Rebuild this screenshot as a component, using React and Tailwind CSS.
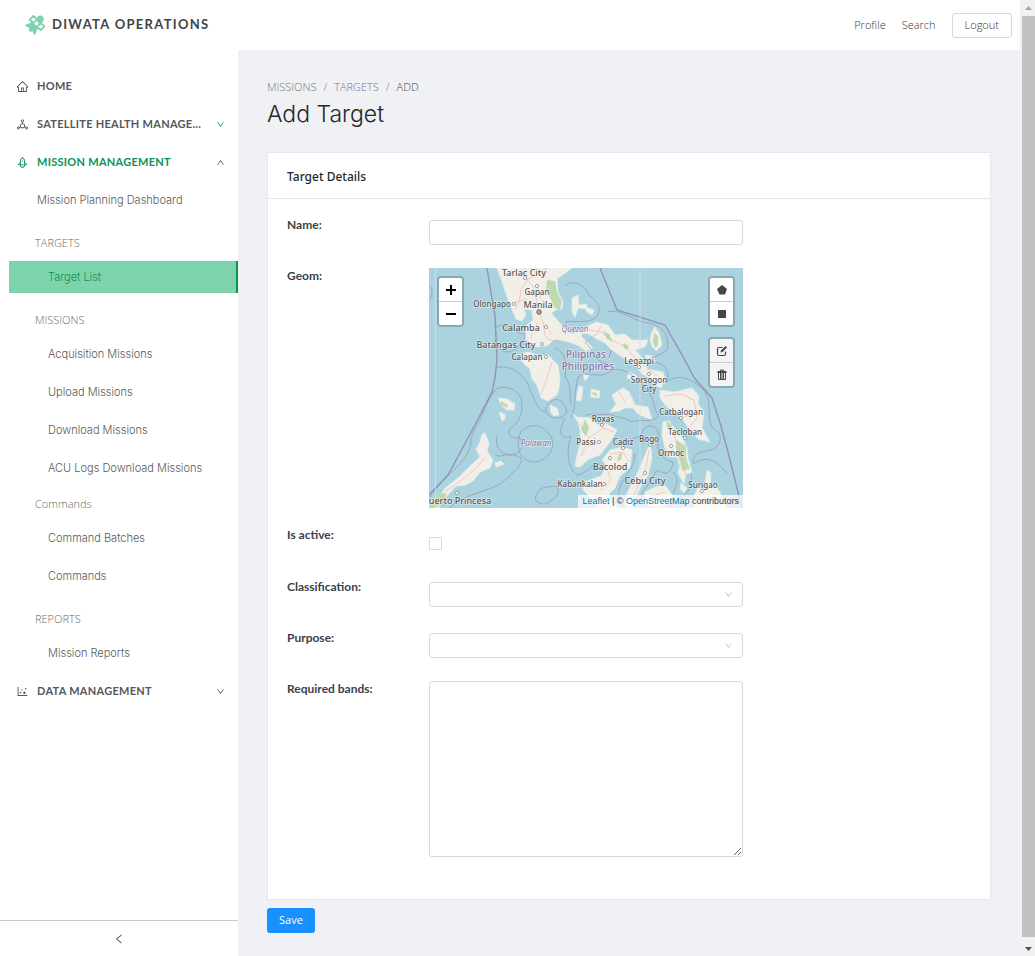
import React from "react";
import {
  AiOutlineHome,
  AiOutlineDeploymentUnit,
  AiOutlineRocket,
  AiOutlineDotChart,
  AiOutlineDown,
  AiOutlineUp,
  AiOutlineLeft,
} from "react-icons/ai";

const land = [
  "M68 0L73 14L79 31L83 41L87 51L93 53L97 47L95 41L103 42L104 52L98 57L96 71L106 79L118 78L126 71L140 74L150 78L158 84L164 80L157 73L152 68L159 58L167 54L179 57L186 67L196 66L203 72L219 72L216 79L206 82L214 91L219 101L234 104L237 113L223 111L213 106L206 97L193 89L183 82L176 75L166 70L160 66L150 64L142 66L136 61L129 53L122 45L127 42L133 41L134 33L129 24L128 11L143 0Z",
  "M88 87L99 84L111 88L119 87L129 97L131 111L130 120L128 127L119 133L112 130L108 117L103 111L101 101L96 97Z",
  "M223 64L226 59L230 65L233 77L227 83L223 78L221 71Z",
  "M143 30L149 27L150 37L158 36L157 41L149 40L146 49L143 44Z",
  "M183 127L194 120L200 124L206 137L219 139L223 152L209 146L204 140L196 140L190 143L181 144L187 136Z",
  "M231 122L245 124L263 120L270 128L269 136L275 144L273 160L281 174L269 171L259 160L253 150L243 143L236 137L231 130Z",
  "M234 154L240 153L246 161L254 171L258 180L259 190L263 204L257 206L255 216L249 205L251 198L248 189L240 189L236 180L233 167Z",
  "M143 145L148 149L161 150L169 157L178 156L188 162L181 174L171 187L160 191L151 199L146 198L148 187L152 174L151 162L149 154Z",
  "M181 182L193 179L203 182L201 200L191 208L186 220L180 226L181 233L189 240L169 240L160 228L154 222L155 214L172 208L178 198L173 192Z",
  "M221 175L223 190L219 207L210 222L205 234L201 240L196 237L198 225L208 206L216 187Z",
  "M216 224L226 219L236 217L243 227L239 236L229 240L216 236Z",
  "M269 219L275 222L278 202L282 205L281 221L286 216L293 228L298 240L266 240L264 230Z",
  "M56 165L60 175L58 183L64 192L61 200L51 204L44 213L36 217L27 218L19 227L9 240L0 240L0 235L12 226L16 220L29 210L39 200L51 189L47 181L51 174L53 166Z",
  "M69 130L78 131L86 136L85 142L78 142L73 138Z",
  "M70 144L76 146L76 151L73 153Z",
  "M66 195L72 193L75 196L67 199Z",
  "M121 137L128 140L130 147L125 148L122 145Z",
  "M150 118L154 119L152 133L147 132Z",
  "M156 39L165 42L163 47L158 44Z",
  "M162 121L171 123L170 130L162 129Z",
  "M216 87L223 88L227 94L220 95Z",
  "M225 110L235 113L232 120L224 116Z",
  "M200 104L208 108L206 113L198 110Z",
  "M154 106L160 108L156 113Z",
  "M252 215L258 220L255 225L251 221Z",
];

const greens = [
  "M118 12L126 13L128 24L133 33L131 42L126 40L121 30L117 20Z",
  "M225 65L229 68L229 77L226 80L224 74Z",
  "M247 172L257 178L257 190L261 201L253 203L251 194L247 183Z",
  "M156 151L160 160L157 168L152 162Z",
  "M72 133L79 137L78 140L72 137Z",
  "M190 186L193 185L192 192L188 193Z",
  "M11 225L18 226L14 235L6 240L0 240L0 237Z",
  "M163 124L168 125L168 128L164 127Z",
  "M174 63L180 66L184 74L178 71Z",
  "M195 75L200 78L198 82L194 79Z",
  "M238 153L243 157L241 162L237 158Z",
];

const roads = [
  "M96 0L98 12L92 22L90 34L86 42M98 12L104 18L107 28L109 42L114 54L116 68L121 72L136 76M109 20L112 32M86 34L98 31M109 55L104 60L102 70M98 12L108 6L118 0M116 55L122 66",
  "M160 62L172 64L182 72L196 78L206 90L216 98L228 108M172 58L168 66L156 74",
  "M112 126L118 110L123 94M151 156L160 170L152 188M160 170L174 160L185 164",
  "M180 186L194 184L200 194M178 200L182 212L172 222M220 182L217 200L208 220L202 236",
  "M241 158L249 176L253 192L257 208M236 128L252 126L265 132L268 150L260 160M218 230L236 224M268 236L286 232",
  "M55 190L50 197L36 210L18 222L6 238M190 124L196 134M252 150L262 146",
];

const boundaries = [
  "M58 0L62 25L66 47L67 70L68 91L66 110L63 124L46 157L19 207L0 227",
  "M171 0L188 42L236 57L253 87L266 111L276 122L283 130L292 158L299 184L309 224L313 240",
];

const coastlines = [
  "M64 124C70 116 86 118 92 130C96 146 88 156 82 160C76 166 84 172 90 169C96 178 94 184 82 187C70 186 66 178 68 168",
  "M92 164C98 156 112 155 118 164C128 172 124 186 114 191C104 198 92 192 90 182C88 172 90 168 92 164",
  "M120 135C128 127 136 134 138 144C134 152 122 152 117 144C116 140 118 138 120 135",
  "M0 230C14 208 38 196 42 176C40 166 50 158 56 140C60 130 64 126 66 123",
  "M20 240C34 226 60 224 74 214C84 204 94 198 92 190C80 182 70 192 66 186",
  "M108 226C112 216 122 220 127 218C133 224 126 232 116 236C108 236 104 232 108 226",
  "M136 150C128 166 132 172 142 168C136 186 140 202 148 207C158 206 162 196 172 196",
  "M66 60C76 52 86 64 94 66C100 62 94 82 78 84C70 84 68 76 66 72",
  "M68 100C80 96 90 104 98 114C104 128 108 142 116 144M142 150C148 138 144 122 150 108C160 102 170 112 180 104",
  "M136 18C144 10 158 18 160 28C170 32 174 44 166 50C158 56 146 52 136 54",
  "M178 44C192 40 202 52 218 55C232 56 242 68 238 82C228 90 222 88 218 94C234 92 242 102 238 114",
  "M180 104C192 96 206 108 216 120C226 128 224 142 230 148C222 156 212 150 202 154C194 148 188 150 180 146C170 148 162 144 156 148",
  "M238 114C250 104 266 112 276 124C284 136 276 156 286 162C296 168 290 180 282 182C272 184 264 184 264 196C280 184 292 198 298 206",
  "M188 176C202 170 212 172 214 162C220 154 230 158 230 170C226 184 234 192 244 194C242 208 236 206 228 202C222 212 218 220 210 228",
  "M206 186C206 200 194 208 190 222C188 232 194 236 194 240M262 206C264 216 260 226 250 230M244 204C252 212 246 220 244 226",
  "M0 18C4 18 4 28 0 32M156 74C166 84 166 94 178 96M126 80C136 84 138 94 136 108C144 120 140 130 142 136",
];

const places = [
  [95, 8, "Tarlac City", 9],
  [108, 27, "Gapan", 8],
  [63, 39, "Olongapo", 8],
  [109, 40, "Manila", 9],
  [92, 63, "Calamba", 9],
  [77, 80, "Batangas City", 9],
  [98, 92, "Calapan", 8],
  [210, 96, "Legazpi", 8],
  [220, 115, "Sorsogon", 8],
  [220, 124, "City", 8],
  [252, 147, "Catbalogan", 8],
  [256, 167, "Tacloban", 8],
  [174, 154, "Roxas", 8],
  [157, 177, "Passi", 8],
  [194, 177, "Cadiz", 8],
  [220, 174, "Bogo", 8],
  [242, 188, "Ormoc", 8],
  [181, 202, "Bacolod", 9],
  [216, 216, "Cebu City", 9],
  [151, 219, "Kabankalan", 8],
  [274, 220, "Surigao", 8],
  [31, 236, "uerto Princesa", 9],
];

const dots = [
  [96, 10], [108, 18], [85, 36], [117, 59], [113, 76], [117, 89], [210, 99],
  [220, 106], [252, 150], [256, 170], [173, 157], [170, 174], [194, 180],
  [221, 177], [242, 178], [181, 190], [216, 205], [175, 216], [273, 223],
  [28, 225],
];

function MapCanvas() {
  return (
    <svg
      viewBox="0 0 314 240"
      preserveAspectRatio="xMidYMid slice"
      className="block h-full w-full"
      fontFamily="'Noto Sans', sans-serif"
      role="img"
      aria-label="Map of the Philippines"
    >
      <rect width="314" height="240" fill="#aad3df" />
      <g fill="#f2efe9" stroke="#dcefed" strokeWidth="0.8" strokeLinejoin="round">
        {land.map((d) => <path key={d} d={d} />)}
      </g>
      <g fill="#bddbb0">{greens.map((d) => <path key={d} d={d} />)}</g>
      <g fill="none" stroke="#edaaa6" strokeWidth="0.7" opacity="0.8">
        {roads.map((d) => <path key={d} d={d} />)}
      </g>
      <g fill="none" stroke="#918fb5" strokeWidth="0.8" opacity="0.8">
        {coastlines.map((d) => <path key={d} d={d} />)}
      </g>
      <g fill="none" stroke="#8d83ab" strokeWidth="1.4" opacity="0.8">
        {boundaries.map((d) => <path key={d} d={d} />)}
      </g>
      <path d="M6.500 0V240M211 0V240" stroke="#d4e1e4" strokeWidth="1" opacity="0.75" />
      <g fill="#fff" stroke="#8a8a8a" strokeWidth="0.8">
        {dots.map(([x, y]) => <circle key={x + "-" + y} cx={x} cy={y} r="1.600" />)}
      </g>
      <circle cx="110" cy="44" r="2.200" fill="#aaa" stroke="#666" />
      <g textAnchor="middle" stroke="#fff" strokeOpacity="0.5" strokeWidth="1.600" strokeLinejoin="round" paintOrder="stroke">
        <g fill="#555">
          {places.map(([x, y, name, size]) => (
            <text key={name} x={x} y={y} fontSize={size} fontWeight="500">{name}</text>
          ))}
        </g>
        <g fill="#8d75a8">
          <text x="160" y="90" fontSize="10" fontWeight="500">Pilipinas /</text>
          <text x="159" y="102" fontSize="10" fontWeight="500">Philippines</text>
          <text x="146" y="64" fontSize="8" fontStyle="italic">Quezon</text>
          <text x="107" y="178" fontSize="8" fontStyle="italic">Palawan</text>
        </g>
      </g>
    </svg>
  );
}

function MapButton({ label, muted, children }) {
  return (
    <button
      type="button"
      aria-label={label}
      className={
        "flex h-6 w-[23px] items-center justify-center border-b border-[#ccc] last:h-[23px] last:border-b-0 " +
        (muted ? "bg-[#f4f4f4]" : "bg-white")
      }
    >
      {children}
    </button>
  );
}

function MapBar({ children }) {
  return (
    <div className="overflow-hidden rounded border-2 border-black/20 bg-clip-padding">
      {children}
    </div>
  );
}

function MapField() {
  return (
    <div className="relative h-60 overflow-hidden">
      <MapCanvas />
      <div className="absolute top-2 left-2">
        <MapBar>
          <MapButton label="Zoom in">
            <svg viewBox="0 0 12 12" className="h-3 w-3"><path d="M6 1V11M1 6H11" stroke="#000" strokeWidth="2" /></svg>
          </MapButton>
          <MapButton label="Zoom out">
            <svg viewBox="0 0 12 12" className="h-3 w-3"><path d="M1 6H11" stroke="#000" strokeWidth="2" /></svg>
          </MapButton>
        </MapBar>
      </div>
      <div className="absolute top-2 right-2 flex flex-col gap-[10px]">
        <MapBar>
          <MapButton label="Draw a polygon">
            <svg viewBox="0 0 12 12" className="h-3 w-3"><path d="M6 1L11 5L9 10.500H3.500L1 5Z" fill="#464646" /></svg>
          </MapButton>
          <MapButton label="Draw a rectangle">
            <svg viewBox="0 0 12 12" className="h-3 w-3"><path d="M2 2H10V10H2Z" fill="#464646" /></svg>
          </MapButton>
        </MapBar>
        <MapBar>
          <MapButton label="Edit layers" muted>
            <svg viewBox="0 0 12 12" className="h-3 w-3" fill="none" stroke="#464646" strokeWidth="1.200">
              <path d="M6.500 2.500H3Q1.500 2.500 1.500 4V9Q1.500 10.500 3 10.500H8Q9.500 10.500 9.500 9V6.500" />
              <path d="M4.500 7.500L5 5.500L9.500 1L11 2.500L6.500 7Z" fill="#464646" stroke="none" />
            </svg>
          </MapButton>
          <MapButton label="Delete layers" muted>
            <svg viewBox="0 0 12 12" className="h-3 w-3" fill="none" stroke="#464646">
              <path d="M1.500 2.500H10.500M4.500 2.500V1H7.500V2.500M2.500 4V10.500H9.500V4M1.500 3.500H10.500M4.500 4V10M6 4V10M7.500 4V10" />
            </svg>
          </MapButton>
        </MapBar>
      </div>
      <p className="absolute right-0 bottom-0 bg-white/70 px-1 font-['Liberation_Sans',sans-serif] text-[9px] leading-[13px] whitespace-nowrap text-[#333]">
        <a href="#leaflet" className="text-[#0078a8]">Leaflet</a> | ©{" "}
        <a href="#osm" className="text-[#0078a8]">OpenStreetMap</a> contributors
      </p>
    </div>
  );
}

function SatelliteLogo() {
  return (
    <svg viewBox="0 0 22 22" className="h-[22px] w-[22px]" fill="#7dd3ac" strokeLinejoin="round">
      <path d="M14 2.500Q16.500 0.500 19 3Q21 5.500 19 7.500L16 10.500L11.500 6Z" />
      <path d="M8 7.500L15 14L12.500 16.500L11.500 20.500Q10 21 9.500 19.500L8.500 17L6.500 18L4.500 16L5.500 14L2.500 12.500Q1 12 1.500 10.500L5.500 9.500Z" />
      <g stroke="#7dd3ac" strokeWidth="1.800" fill="#fff">
        <path d="M9.500 1.800L13 5L9.500 9L5.800 5.500Z" />
        <path d="M16.700 8.800L20.300 12.500L16.700 16.200L13.200 12.500Z" />
      </g>
    </svg>
  );
}

function Section({ icon: Icon, arrow: Arrow, active, teal, children }) {
  return (
    <li>
      <a
        href="#section"
        className={
          "flex h-8 items-center pr-[13px] pl-4 font-['Lato',sans-serif] text-[11px] font-bold tracking-wide uppercase " +
          (active ? "text-[#0b9355]" : "text-[#53585b]")
        }
      >
        <Icon className="mr-2 h-[13px] w-[13px] shrink-0" />
        <span className="flex-1 whitespace-nowrap">{children}</span>
        {Arrow && <Arrow className={"h-[9px] w-[9px] shrink-0 " + (teal ? "text-[#0b9355]" : "text-[#4a4f52]")} />}
      </a>
    </li>
  );
}

function GroupLabel({ tight, children }) {
  return (
    <li className={"flex h-6 items-center pl-[35px] font-['Open_Sans',sans-serif] text-[11px] font-light text-[#6b6b6b] " + (tight ? "mt-0.5" : "mt-[9px]")}>
      {children}
    </li>
  );
}

function Item({ active, top, children }) {
  return (
    <li className="pl-[9px]">
      <a
        href="#item"
        className={
          "flex h-8 items-center font-['Inter',sans-serif] text-[11px] font-light " +
          (top ? "pl-7 " : "pl-[39px] ") +
          (active ? "border-r-2 border-[#0b9355] bg-[#7dd3ac] text-[#0b9355]" : "text-[#595959]")
        }
      >
        {children}
      </a>
    </li>
  );
}

function Sidebar() {
  return (
    <aside className="flex w-[238px] shrink-0 flex-col bg-white">
      <nav className="flex-1 pt-5">
        <ul className="flex flex-col gap-1.5">
          <Section icon={AiOutlineHome}>Home</Section>
          <Section icon={AiOutlineDeploymentUnit} arrow={AiOutlineDown} teal>Satellite Health Manage...</Section>
          <Section icon={AiOutlineRocket} arrow={AiOutlineUp} active>Mission Management</Section>
          <Item top>Mission Planning Dashboard</Item>
          <GroupLabel>TARGETS</GroupLabel>
          <Item active>Target List</Item>
          <GroupLabel>MISSIONS</GroupLabel>
          <Item>Acquisition Missions</Item>
          <Item>Upload Missions</Item>
          <Item>Download Missions</Item>
          <Item>ACU Logs Download Missions</Item>
          <GroupLabel tight>Commands</GroupLabel>
          <Item>Command Batches</Item>
          <Item>Commands</Item>
          <GroupLabel>REPORTS</GroupLabel>
          <Item>Mission Reports</Item>
          <Section icon={AiOutlineDotChart} arrow={AiOutlineDown}>Data Management</Section>
        </ul>
      </nav>
      <button type="button" aria-label="Collapse menu" className="flex h-9 items-center justify-center border-t border-[#c8c8c8] text-[#595959]">
        <AiOutlineLeft className="h-3 w-3" />
      </button>
    </aside>
  );
}

const rowClass = "grid grid-cols-[142px_minmax(0,314px)]";
const labelClass = "text-xs leading-4 font-bold text-[#3a3f4b]";
const boxClass = "block w-full rounded-[3px] border border-[#d9d9d9] bg-white";

function SelectRow({ id, label }) {
  return (
    <div className={rowClass + " h-8"}>
      <label htmlFor={id} className={labelClass}>{label}</label>
      <div className="grid pt-[3px]">
        <select id={id} defaultValue="" className={boxClass + " col-start-1 row-start-1 h-[25px] appearance-none px-2 text-xs"}>
          <option value=""></option>
        </select>
        <AiOutlineDown className="pointer-events-none col-start-1 row-start-1 mt-2 mr-[10px] h-[9px] w-[9px] justify-self-end text-[#bfbfbf]" />
      </div>
    </div>
  );
}

function TargetForm() {
  return (
    <form className="font-['Open_Sans',sans-serif]" onSubmit={(e) => e.preventDefault()}>
      <section className="border border-[#e6e7ea] bg-white">
        <h2 className="border-b border-[#e6e7ea] px-[19px] pt-[13px] pb-[11px] font-['Noto_Sans',sans-serif] text-xs leading-[21px] font-medium text-[#262626]">
          Target Details
        </h2>
        <div className="flex flex-col gap-[19px] px-[19px] pt-[18px] pb-[42px] font-['Lato',sans-serif]">
          <div className={rowClass + " h-8"}>
            <label htmlFor="name" className={labelClass}>Name:</label>
            <div className="pt-[3px]">
              <input id="name" type="text" className={boxClass + " h-[25px] px-2 text-xs"} />
            </div>
          </div>
          <div className={rowClass}>
            <span className={labelClass}>Geom:</span>
            <MapField />
          </div>
          <div className={rowClass + " h-[33px]"}>
            <label htmlFor="active" className={labelClass}>Is active:</label>
            <div className="pt-[10px]">
              <input id="active" type="checkbox" className="block h-[13px] w-[13px] appearance-none rounded-[1px] border border-[#d9d9d9] bg-white checked:bg-[#1890ff]" />
            </div>
          </div>
          <SelectRow id="classification" label="Classification:" />
          <SelectRow id="purpose" label="Purpose:" />
          <div className={rowClass}>
            <label htmlFor="bands" className={labelClass}>Required bands:</label>
            <textarea id="bands" className={boxClass + " h-44 resize p-2 text-xs"} />
          </div>
        </div>
      </section>
      <button type="submit" className="mt-2 h-[25px] rounded-[3px] bg-[#1890ff] px-3 text-[11px] text-white">
        Save
      </button>
    </form>
  );
}

function ScrollTrack() {
  return (
    <div aria-hidden="true" className="sticky top-0 flex h-screen w-[15px] shrink-0 flex-col items-end bg-[#f1f1f1]">
      <svg viewBox="0 0 13 16" className="h-4 w-[13px] shrink-0"><path d="M3 10L6.500 6L10 10Z" fill="#a3a3a3" /></svg>
      <div className="w-[13px] flex-1 bg-[#c1c1c1]" />
      <svg viewBox="0 0 13 19" className="h-[19px] w-[13px] shrink-0"><path d="M3 10L6.500 14L10 10Z" fill="#505050" /></svg>
    </div>
  );
}

export default function App() {
  return (
    <div className="flex min-h-screen bg-white">
      <div className="flex min-w-0 flex-1 flex-col">
        <header className="flex h-[50px] items-center justify-between bg-white pr-2 pl-6">
          <a href="#home" className="flex items-center gap-[6px] font-['Lato',sans-serif] text-[13px] font-bold tracking-widest text-[#3f4447]">
            <SatelliteLogo />
            DIWATA OPERATIONS
          </a>
          <nav className="flex items-center gap-4 font-['Open_Sans',sans-serif] text-[11px] font-light text-[#333]">
            <a href="#profile">Profile</a>
            <a href="#search">Search</a>
            <button type="button" className="h-[25px] rounded-[3px] border border-[#d9d9d9] px-3">Logout</button>
          </nav>
        </header>
        <div className="flex flex-1">
          <Sidebar />
          <main className="min-w-0 flex-1 bg-[#f0f1f5] px-[29px] pt-7 pb-[22px]">
            <nav aria-label="Breadcrumb" className="flex gap-[7px] font-['Open_Sans',sans-serif] text-[11px] leading-[18px] font-light text-[#777]">
              <a href="#missions">MISSIONS</a>
              <span>/</span>
              <a href="#targets">TARGETS</a>
              <span>/</span>
              <span className="text-[#404040]">ADD</span>
            </nav>
            <h1 className="pt-0.5 pb-[22px] font-['Inter',sans-serif] text-[23px] leading-8 font-light text-[#262626]">Add Target</h1>
            <TargetForm />
          </main>
        </div>
      </div>
      <ScrollTrack />
    </div>
  );
}
